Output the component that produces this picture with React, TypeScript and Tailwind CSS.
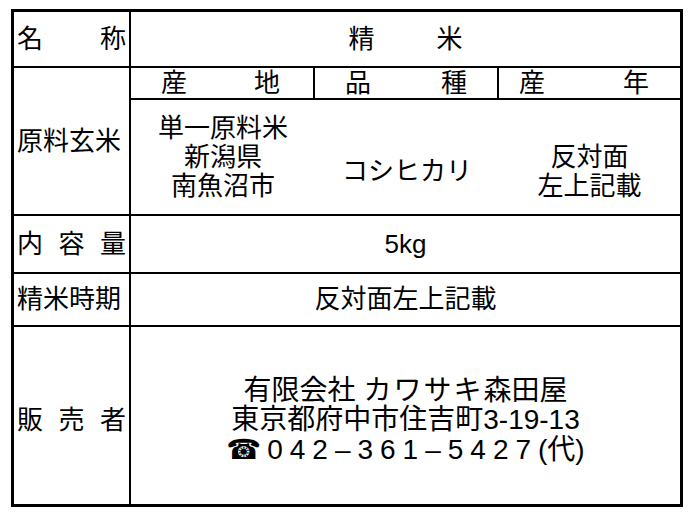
export default function App() {
  return (
    <div className="w-[691px] h-[517px] bg-white pt-[9px] pl-[11px] text-black font-['Liberation_Sans','Noto_Sans_CJK_JP',sans-serif] text-[26px] leading-[29px]">
      <div className="w-[672px] h-[498px] border-[3px] border-black flex flex-col">
        {/* 名称 */}
        <div className="flex h-[56px] border-b-2 border-black">
          <div className="w-[117px] border-r-2 border-black flex items-center justify-between px-[3px]">
            <span>名</span>
            <span>称</span>
          </div>
          <div className="flex-1 flex items-center justify-center gap-[62px]">
            <span>精</span>
            <span>米</span>
          </div>
        </div>

        {/* 原料玄米 */}
        <div className="flex h-[148px] border-b-2 border-black">
          <div className="w-[117px] border-r-2 border-black flex items-center pl-[3px]">
            <span>原料玄米</span>
          </div>
          <div className="flex-1 flex flex-col">
            <div className="flex h-[32px] border-b-2 border-black">
              <div className="w-[184px] border-r-2 border-black flex items-center justify-between pl-[30px] pr-[33px]">
                <span>産</span>
                <span>地</span>
              </div>
              <div className="w-[184px] border-r-2 border-black flex items-center justify-between pl-[30px] pr-[30px]">
                <span>品</span>
                <span>種</span>
              </div>
              <div className="flex-1 flex items-center justify-between pl-[20px] pr-[31px]">
                <span>産</span>
                <span>年</span>
              </div>
            </div>
            <div className="flex-1 flex">
              <div className="w-[184px] flex flex-col items-center justify-center">
                <span>単一原料米</span>
                <span>新潟県</span>
                <span>南魚沼市</span>
              </div>
              <div className="w-[184px] flex items-center justify-center pt-[29px]">
                <span>コシヒカリ</span>
              </div>
              <div className="flex-1 flex flex-col items-center justify-center pt-[29px]">
                <span>反対面</span>
                <span>左上記載</span>
              </div>
            </div>
          </div>
        </div>

        {/* 内容量 */}
        <div className="flex h-[58px] border-b-2 border-black">
          <div className="w-[117px] border-r-2 border-black flex items-center justify-between px-[3px]">
            <span>内</span>
            <span>容</span>
            <span>量</span>
          </div>
          <div className="flex-1 flex items-center justify-center">
            <span>5kg</span>
          </div>
        </div>

        {/* 精米時期 */}
        <div className="flex h-[53px] border-b-2 border-black">
          <div className="w-[117px] border-r-2 border-black flex items-center pl-[3px]">
            <span>精米時期</span>
          </div>
          <div className="flex-1 flex items-center justify-center">
            <span>反対面左上記載</span>
          </div>
        </div>

        {/* 販売者 */}
        <div className="flex flex-1">
          <div className="w-[117px] border-r-2 border-black flex items-center justify-between px-[3px] pt-[9px]">
            <span>販</span>
            <span>売</span>
            <span>者</span>
          </div>
          <div className="flex-1 flex flex-col items-center justify-center pt-[9px] text-[28px] leading-[29.5px]">
            <span>
              有限会社 <span className="tracking-[2px]">カワサキ</span>森田屋
            </span>
            <span>東京都府中市住吉町3-19-13</span>
            <span className="flex items-center">
              <span className="font-['DejaVu_Sans'] text-[28px] mr-[6px]">☎</span>
              <span className="tracking-[7px]">042–361–5427</span>
              <span>(代)</span>
            </span>
          </div>
        </div>
      </div>
    </div>
  );
}
